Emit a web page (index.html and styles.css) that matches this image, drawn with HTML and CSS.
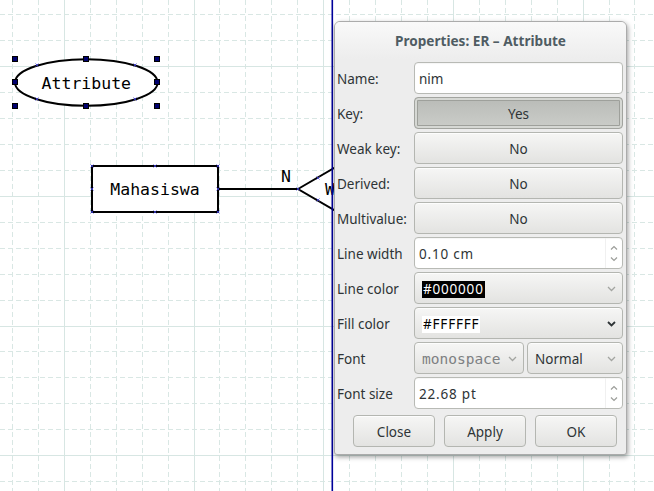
FILE: index.html
```html
<!DOCTYPE html>
<html>
<head>
<meta charset="utf-8">
<title>ER Attribute Properties</title>
<link rel="stylesheet" href="styles.css">
</head>
<body>
<div class="canvas">
  <svg class="diagram" width="654" height="491" viewBox="0 0 654 491" xmlns="http://www.w3.org/2000/svg">
    <g class="grid-dash">
      <line x1="12.5" y1="0" x2="12.5" y2="491"/>
      <line x1="38.5" y1="0" x2="38.5" y2="491"/>
      <line x1="90.5" y1="0" x2="90.5" y2="491"/>
      <line x1="116.5" y1="0" x2="116.5" y2="491"/>
      <line x1="142.5" y1="0" x2="142.5" y2="491"/>
      <line x1="168.5" y1="0" x2="168.5" y2="491"/>
      <line x1="219.5" y1="0" x2="219.5" y2="491"/>
      <line x1="245.5" y1="0" x2="245.5" y2="491"/>
      <line x1="271.5" y1="0" x2="271.5" y2="491"/>
      <line x1="297.5" y1="0" x2="297.5" y2="491"/>
      <line x1="349.5" y1="0" x2="349.5" y2="491"/>
      <line x1="375.5" y1="0" x2="375.5" y2="491"/>
      <line x1="401.5" y1="0" x2="401.5" y2="491"/>
      <line x1="427.5" y1="0" x2="427.5" y2="491"/>
      <line x1="479.5" y1="0" x2="479.5" y2="491"/>
      <line x1="505.5" y1="0" x2="505.5" y2="491"/>
      <line x1="531.5" y1="0" x2="531.5" y2="491"/>
      <line x1="557.5" y1="0" x2="557.5" y2="491"/>
      <line x1="609.5" y1="0" x2="609.5" y2="491"/>
      <line x1="634.5" y1="0" x2="634.5" y2="491"/>
      <line x1="0" y1="14.5" x2="654" y2="14.5"/>
      <line x1="0" y1="40.5" x2="654" y2="40.5"/>
      <line x1="0" y1="92.5" x2="654" y2="92.5"/>
      <line x1="0" y1="118.5" x2="654" y2="118.5"/>
      <line x1="0" y1="144.5" x2="654" y2="144.5"/>
      <line x1="0" y1="170.5" x2="654" y2="170.5"/>
      <line x1="0" y1="222.5" x2="654" y2="222.5"/>
      <line x1="0" y1="248.5" x2="654" y2="248.5"/>
      <line x1="0" y1="274.5" x2="654" y2="274.5"/>
      <line x1="0" y1="300.5" x2="654" y2="300.5"/>
      <line x1="0" y1="351.5" x2="654" y2="351.5"/>
      <line x1="0" y1="377.5" x2="654" y2="377.5"/>
      <line x1="0" y1="403.5" x2="654" y2="403.5"/>
      <line x1="0" y1="429.5" x2="654" y2="429.5"/>
      <line x1="0" y1="481.5" x2="654" y2="481.5"/>
    </g>
    <g class="grid-solid">
      <line x1="64.5" y1="0" x2="64.5" y2="491"/>
      <line x1="194.5" y1="0" x2="194.5" y2="491"/>
      <line x1="323.5" y1="0" x2="323.5" y2="491"/>
      <line x1="453.5" y1="0" x2="453.5" y2="491"/>
      <line x1="583.5" y1="0" x2="583.5" y2="491"/>
      <line x1="0" y1="66.5" x2="654" y2="66.5"/>
      <line x1="0" y1="196.5" x2="654" y2="196.5"/>
      <line x1="0" y1="326.5" x2="654" y2="326.5"/>
      <line x1="0" y1="455.5" x2="654" y2="455.5"/>
    </g>

    <!-- Attribute ellipse (selected) -->
    <ellipse class="shape" cx="86.3" cy="82.5" rx="71.3" ry="23.3"/>
    <text class="mono" x="86.3" y="88.5" text-anchor="middle">Attribute</text>
    <g class="cp">
      <path d="M35.5 63.5l3 3M38.5 63.5l-3 3"/>
      <path d="M133.5 63.5l3 3M136.5 63.5l-3 3"/>
      <path d="M35.5 97.5l3 3M38.5 97.5l-3 3"/>
      <path d="M133.5 97.5l3 3M136.5 97.5l-3 3"/>
    </g>
    <g class="handle">
      <rect x="12.5" y="56.5" width="5" height="5"/>
      <rect x="83.5" y="56.5" width="5" height="5"/>
      <rect x="154.5" y="56.5" width="5" height="5"/>
      <rect x="12.5" y="79.5" width="5" height="5"/>
      <rect x="154.5" y="79.5" width="5" height="5"/>
      <rect x="12.5" y="103.5" width="5" height="5"/>
      <rect x="83.5" y="103.5" width="5" height="5"/>
      <rect x="154.5" y="103.5" width="5" height="5"/>
    </g>

    <!-- Relationship connector and diamond -->
    <line class="shape" x1="218" y1="189" x2="298" y2="189"/>
    <polygon class="shape" points="298,189 360,153 422,189 360,225"/>
    <text class="mono" x="286" y="181.5" text-anchor="middle">N</text>
    <text class="mono" x="325" y="195">W</text>

    <!-- Entity rectangle -->
    <rect class="shape" x="92" y="166" width="126" height="46"/>
    <text class="mono" x="155" y="195" text-anchor="middle">Mahasiswa</text>
    <g class="cp">
      <path d="M90.5 164.5l3 3M93.5 164.5l-3 3"/>
      <path d="M153.5 164.5l3 3M156.5 164.5l-3 3"/>
      <path d="M216.5 164.5l3 3M219.5 164.5l-3 3"/>
      <path d="M90.5 187.5l3 3M93.5 187.5l-3 3"/>
      <path d="M216.5 187.5l3 3M219.5 187.5l-3 3"/>
      <path d="M90.5 210.5l3 3M93.5 210.5l-3 3"/>
      <path d="M153.5 210.5l3 3M156.5 210.5l-3 3"/>
      <path d="M216.5 210.5l3 3M219.5 210.5l-3 3"/>
      <path d="M296.5 187.5l3 3M299.5 187.5l-3 3"/>
      <path d="M316.5 176.5l3 3M319.5 176.5l-3 3"/>
      <path d="M316.5 198.5l3 3M319.5 198.5l-3 3"/>
    </g>

    <!-- page boundary -->
    <rect class="pagebreak" x="331.5" y="0" width="1.6" height="491"/>
  </svg>

  <div class="dialog">
    <div class="dialog-head">Properties: ER – Attribute</div>
    <div class="dialog-body">
      <div class="label">Name:</div>
      <div class="entry"><span class="entry-text">nim</span></div>

      <div class="label">Key:</div>
      <div class="btn pressed">Yes</div>

      <div class="label">Weak key:</div>
      <div class="btn">No</div>

      <div class="label">Derived:</div>
      <div class="btn">No</div>

      <div class="label">Multivalue:</div>
      <div class="btn">No</div>

      <div class="label">Line width</div>
      <div class="entry spin">
        <span class="entry-text value">0.10 cm</span>
        <span class="spin-arrows">
          <svg width="8" height="5" viewBox="0 0 8 5"><path d="M1 4.5L4 1.5L7 4.5"/></svg>
          <svg width="8" height="5" viewBox="0 0 8 5"><path d="M1 0.5L4 3.5L7 0.5"/></svg>
        </span>
      </div>

      <div class="label">Line color</div>
      <div class="combo">
        <span class="sel sel-dark value">#000000</span>
        <svg class="chev light" width="9" height="6" viewBox="0 0 9 6"><path d="M1 1L4.5 4.5L8 1"/></svg>
      </div>

      <div class="label">Fill color</div>
      <div class="combo">
        <span class="sel sel-white value">#FFFFFF</span>
        <svg class="chev dark" width="9" height="6" viewBox="0 0 9 6"><path d="M1 1L4.5 4.5L8 1"/></svg>
      </div>

      <div class="label">Font</div>
      <div class="font-pair">
        <div class="combo combo-family">
          <span class="family">monospace</span>
          <svg class="chev light" width="9" height="6" viewBox="0 0 9 6"><path d="M1 1L4.5 4.5L8 1"/></svg>
        </div>
        <div class="combo combo-style">
          <span>Normal</span>
          <svg class="chev light" width="9" height="6" viewBox="0 0 9 6"><path d="M1 1L4.5 4.5L8 1"/></svg>
        </div>
      </div>

      <div class="label">Font size</div>
      <div class="entry spin">
        <span class="entry-text value">22.68 pt</span>
        <span class="spin-arrows">
          <svg width="8" height="5" viewBox="0 0 8 5"><path d="M1 4.5L4 1.5L7 4.5"/></svg>
          <svg width="8" height="5" viewBox="0 0 8 5"><path d="M1 0.5L4 3.5L7 0.5"/></svg>
        </span>
      </div>
    </div>
    <div class="dialog-actions">
      <div class="btn action">Close</div>
      <div class="btn action">Apply</div>
      <div class="btn action">OK</div>
    </div>
  </div>
</div>
</body>
</html>
```
FILE: styles.css
```css
html, body {
  margin: 0;
  padding: 0;
  background: #ffffff;
  overflow: hidden;
}

.canvas {
  position: relative;
  width: 654px;
  height: 491px;
  overflow: hidden;
  background: #ffffff;
}

.diagram {
  display: block;
}

.grid-dash line {
  stroke: #d9e7e4;
  stroke-width: 1;
  stroke-dasharray: 5 3;
}

.grid-solid line {
  stroke: #d7e6e3;
  stroke-width: 1;
}

.shape {
  fill: #ffffff;
  stroke: #000000;
  stroke-width: 2;
}

.mono {
  font-family: "DejaVu Sans Mono", monospace;
  font-size: 16.5px;
  fill: #000000;
}

.cp path {
  stroke: #3a3ad0;
  stroke-width: 0.8;
  fill: none;
}

.handle rect {
  fill: #00006e;
  stroke: #000000;
  stroke-width: 1;
}

.pagebreak {
  fill: #00009a;
}

/* dialog window */
.dialog {
  position: absolute;
  left: 334px;
  top: 21px;
  width: 293px;
  height: 434px;
  box-sizing: border-box;
  border: 1px solid #ababab;
  border-radius: 6px 6px 3px 3px;
  background: #ededed;
  box-shadow: 1px 2px 5px rgba(0, 0, 0, 0.38);
  font-family: "Noto Sans", "DejaVu Sans", sans-serif;
  font-size: 13.5px;
  color: #2e3436;
  display: flex;
  flex-direction: column;
}

.dialog-head {
  height: 37px;
  display: flex;
  align-items: center;
  justify-content: center;
  font-weight: bold;
  font-size: 13.6px;
  color: #4f5c63;
  background: linear-gradient(#f9f9f9, #ededed);
  border-radius: 5px 5px 0 0;
}

.dialog-body {
  display: grid;
  grid-template-columns: 77px 1fr;
  grid-auto-rows: 32px;
  row-gap: 3px;
  padding: 3px 3px 0 2px;
}

.label {
  display: flex;
  align-items: center;
  padding-top: 2px;
  white-space: nowrap;
}

.entry {
  box-sizing: border-box;
  background: #ffffff;
  border: 1px solid #b8bab5;
  border-radius: 4px;
  padding: 2px 0 0 4px;
  display: flex;
  align-items: center;
  box-shadow: inset 0 1px 1px rgba(0, 0, 0, 0.04);
}

.entry-text {
  flex: 1;
}

.value {
  letter-spacing: 0.8px;
}

.spin {
  padding-right: 0;
}

.spin-arrows {
  align-self: stretch;
  width: 16px;
  margin-top: -2px;
  display: flex;
  flex-direction: column;
  align-items: center;
  justify-content: space-around;
  padding: 3px 0;
  border-left: 1px solid #f0f0f0;
}

.spin-arrows path {
  fill: none;
  stroke: #9c9e9a;
  stroke-width: 1.2;
}

.btn {
  box-sizing: border-box;
  display: flex;
  align-items: center;
  justify-content: center;
  padding-top: 2px;
  background: linear-gradient(#f6f6f5, #e3e3e1);
  border: 1px solid #b4b6b1;
  border-radius: 4px;
  box-shadow: inset 0 1px 0 rgba(255, 255, 255, 0.8);
}

.btn.pressed {
  background: linear-gradient(#b9bbb7, #cbcdc9);
  border-color: #a2a49f;
  box-shadow: inset 0 0 0 2px #d6d8d4, inset 0 0 0 3px #9ea09b;
}

.combo {
  box-sizing: border-box;
  display: flex;
  align-items: center;
  padding: 2px 6px 0 7px;
  background: linear-gradient(#f6f6f5, #e3e3e1);
  border: 1px solid #b4b6b1;
  border-radius: 4px;
  box-shadow: inset 0 1px 0 rgba(255, 255, 255, 0.8);
}

.combo > span {
  flex: 1;
}

.combo .sel {
  flex: 0 0 auto;
  line-height: 17px;
  margin-right: auto;
}

.sel-dark {
  background: #000000;
  color: #ffffff;
  padding: 0 1px;
}

.sel-white {
  background: #ffffff;
  color: #000000;
  padding: 0 1px;
}

.chev {
  flex: 0 0 auto;
}

.chev path {
  fill: none;
  stroke-width: 1.3;
}

.chev.light path {
  stroke: #a3a5a1;
}

.chev.dark path {
  stroke: #2e3436;
  stroke-width: 1.8;
}

.font-pair {
  display: flex;
  gap: 3px;
}

.combo-family {
  width: 110px;
}

.combo-style {
  flex: 1;
}

.family {
  font-family: "DejaVu Sans Mono", monospace;
  font-size: 14.5px;
  color: #7d8082;
}

.dialog-actions {
  display: flex;
  justify-content: flex-end;
  gap: 9px;
  padding: 6px 9px 0 0;
}

.btn.action {
  width: 82px;
  height: 32px;
}
```
